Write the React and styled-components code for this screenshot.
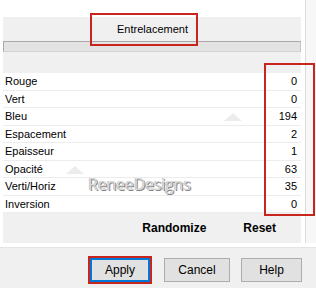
import styled, { createGlobalStyle } from "styled-components";

const GlobalStyle = createGlobalStyle`
  body {
    margin: 0;
    font-family: "Liberation Sans", Arial, sans-serif;
    color: #000;
  }
`;

const rows = [
  ["Rouge", 0],
  ["Vert", 0],
  ["Bleu", 194],
  ["Espacement", 2],
  ["Epaisseur", 1],
  ["Opacité", 63],
  ["Verti/Horiz", 35],
  ["Inversion", 0],
];

const Dialog = styled.div`
  position: relative;
  width: 316px;
  height: 288px;
  background: #fff;
  overflow: hidden;
  display: flex;
  flex-direction: column;
`;

const Top = styled.div`
  display: flex;
  height: 243px;
`;

const Gutter = styled.div`
  width: 3px;
`;

const Panel = styled.div`
  position: relative;
  margin-top: 17px;
  width: 299px;
  height: 226px;
  background: #f0f0f0;
  display: flex;
  flex-direction: column;
`;

const Side = styled.div`
  margin-left: 4px;
  width: 10px;
  border-left: 1px solid #dcdcdc;
  background: #f7f7f7;
`;

const Header = styled.div`
  height: 24px;
  display: flex;
  align-items: center;
  justify-content: center;
  font-size: 11px;
  padding-left: 1px;
`;

const Bar = styled.div`
  height: 9px;
  border: 1px solid #a9a9a9;
  border-bottom-color: #d4d4d4;
  border-right-color: #c4c4c4;
  background: #e3e3e3;
`;

const Spacer = styled.div`
  height: 21px;
`;

const List = styled.div`
  position: relative;
  background: #fff;
  display: grid;
  grid-auto-rows: 17.5px;
`;

const Row = styled.div`
  display: flex;
  align-items: center;
  justify-content: space-between;
  padding: 0 4px 0 2px;
  font-size: 11px;
  border-bottom: 1px solid #ececec;
  box-sizing: border-box;
`;

const Actions = styled.div`
  flex: 1;
  display: flex;
  align-items: center;
  justify-content: flex-end;
  gap: 37px;
  padding-right: 25px;
  font-size: 12px;
  font-weight: bold;
`;

const Watermark = styled.div`
  position: absolute;
  left: 85px;
  top: 100px;
  font-family: "Open Sans", "DejaVu Sans", sans-serif;
  font-size: 16px;
  letter-spacing: -0.2px;
  color: #dcdcdc;
  text-shadow: 1px 1px 0 #858585, -0.5px -0.5px 0 #b5b5b5;
  pointer-events: none;
`;

const Arrow = styled.div`
  position: absolute;
  left: ${(p) => p.$x}px;
  top: ${(p) => p.$y}px;
  width: 0;
  height: 0;
  border-left: 9px solid transparent;
  border-right: 9px solid transparent;
  border-bottom: 8px solid #ececec;
`;

const Mark = styled.div`
  position: absolute;
  left: ${(p) => p.$x}px;
  top: ${(p) => p.$y}px;
  width: ${(p) => p.$w}px;
  height: ${(p) => p.$h}px;
  box-sizing: border-box;
  border: 2px solid #c8261c;
  pointer-events: none;
`;

const Footer = styled.div`
  margin-top: 4px;
  flex: 1;
  background: #f0f0f0;
  border-top: 1px solid #e3e3e3;
  display: flex;
  align-items: flex-start;
  padding: 10px 0 0 90px;
  gap: 14px;
`;

const Button = styled.button`
  width: ${(p) => p.$w}px;
  height: 24px;
  margin-left: ${(p) => p.$ml || 0}px;
  box-sizing: border-box;
  background: #e1e1e1;
  border: ${(p) => (p.$primary ? "2px solid #0078d7" : "1px solid #adadad")};
  outline: ${(p) => (p.$primary ? "2px solid #c8261c" : "none")};
  font-family: "Liberation Sans", Arial, sans-serif;
  font-size: 12px;
  color: #000;
  padding: 0;
`;

export default function App() {
  return (
    <>
      <GlobalStyle />
      <Dialog>
        <Top>
          <Gutter />
          <Panel>
            <Header>Entrelacement</Header>
            <Bar />
            <Spacer />
            <List>
              {rows.map(([label, value]) => (
                <Row key={label}>
                  <span>{label}</span>
                  <span>{value}</span>
                </Row>
              ))}
              <Arrow $x={221} $y={40} />
              <Arrow $x={63} $y={93} />
              <Watermark>ReneeDesigns</Watermark>
            </List>
            <Actions>
              <span>Randomize</span>
              <span>Reset</span>
            </Actions>
          </Panel>
          <Side />
        </Top>
        <Footer>
          <Button $w={60} $primary>Apply</Button>
          <Button $w={66}>Cancel</Button>
          <Button $w={61} $ml={-3}>Help</Button>
        </Footer>
        <Mark $x={90} $y={13} $w={108} $h={33} />
        <Mark $x={264} $y={63} $w={51} $h={153} />
      </Dialog>
    </>
  );
}
